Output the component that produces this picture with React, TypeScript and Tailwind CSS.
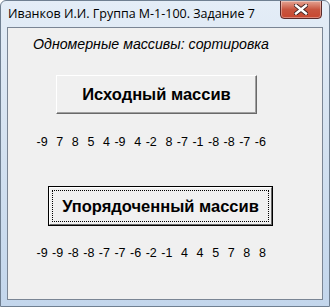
const source = [-9, 7, 8, 5, 4, -9, 4, -2, 8, -7, -1, -8, -8, -7, -6];
const sorted = [...source].sort((a, b) => a - b);

function NumberRow({ values }: { values: number[] }) {
  return (
    <div className="flex pl-[24px] text-[12.5px] leading-[14px] text-black">
      {values.map((v, i) => (
        <span key={i} className="w-[15.6px] text-right">
          {v}
        </span>
      ))}
    </div>
  );
}

export default function App() {
  return (
    <div
      className="relative h-[307px] w-[330px] overflow-hidden rounded-t-[6px] border border-[#6f7f91] bg-gradient-to-b from-[#e4edf7] via-[#d3e1f0] to-[#c3d6ec]"
      style={{ fontFamily: '"Liberation Sans", Arial, sans-serif' }}
    >
      {/* Title bar */}
      <div className="flex h-[26px] items-center pl-[7px]">
        <span
          className="text-[12.5px] text-black"
          style={{ fontFamily: '"Open Sans", "Noto Sans", sans-serif' }}
        >
          Иванков И.И. Группа М-1-100. Задание 7
        </span>
      </div>

      {/* Close button */}
      <div className="absolute right-[7px] top-[-1px] flex h-[19px] w-[42px] items-center justify-center rounded-b-[4px] border border-[#5a2a2a] bg-gradient-to-b from-[#e3a393] via-[#c8553f] to-[#c8472f] shadow-[inset_0_0_0_1px_rgba(255,255,255,0.35)]">
        <svg width="14" height="11" viewBox="0 0 14 11">
          <path
            d="M2 1.5 L12 9.5 M12 1.5 L2 9.5"
            stroke="#3b2020"
            strokeWidth="4.2"
            strokeLinecap="square"
          />
          <path
            d="M2 1.5 L12 9.5 M12 1.5 L2 9.5"
            stroke="#ffffff"
            strokeWidth="2.4"
            strokeLinecap="square"
          />
        </svg>
      </div>

      {/* Client area */}
      <div className="mx-[6px] flex h-[273px] flex-col border border-[#7a8594] bg-[#f0f0f0]">
        <div className="pl-[25px] pt-[7px] text-[14.2px] italic leading-[18px] text-black">
          Одномерные массивы: сортировка
        </div>

        <div className="mt-[22px] pl-[48px]">
          <div className="flex h-[39px] w-[201px] items-center justify-center border border-t-white border-l-white border-r-[#696969] border-b-[#696969] bg-[#f0f0f0] shadow-[inset_-1px_-1px_0_#a0a0a0]">
            <span className="text-[16.5px] font-bold text-black">Исходный массив</span>
          </div>
        </div>

        <div className="mt-[21px]">
          <NumberRow values={source} />
        </div>

        <div className="mt-[37px] pl-[40px]">
          <div className="h-[40px] w-[225px] border border-black bg-[#f0f0f0]">
            <div className="flex h-full w-full items-center justify-center border border-t-white border-l-white border-r-[#696969] border-b-[#696969] p-[2px]">
              <div className="flex h-full w-full items-center justify-center border border-dotted border-black">
                <span className="text-[16.5px] font-bold text-black">Упорядоченный массив</span>
              </div>
            </div>
          </div>
        </div>

        <div className="mt-[20px]">
          <NumberRow values={sorted} />
        </div>
      </div>
    </div>
  );
}
